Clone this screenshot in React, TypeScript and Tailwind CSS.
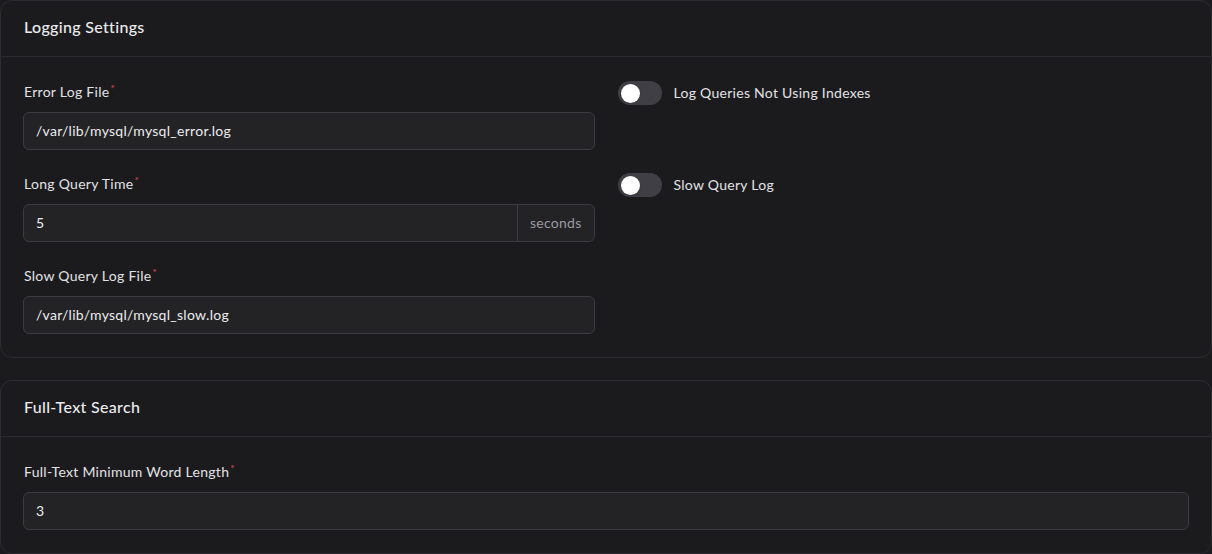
import type { ReactNode } from 'react';

const FONT = { fontFamily: 'Lato, "Noto Sans", sans-serif' };

function Card({ title, children }: { title: string; children: ReactNode }) {
  return (
    <section className="rounded-xl border border-[#2c2c30] bg-[#1b1b1e]">
      <header className="flex h-14 items-center border-b border-[#2c2c30] px-[23px] pb-1">
        <h2 className="text-base font-medium tracking-[0.02em] text-[#ececee]">{title}</h2>
      </header>
      <div className="px-[22px] pb-[23px] pt-[25px]">{children}</div>
    </section>
  );
}

function Label({ children }: { children: ReactNode }) {
  return (
    <label className="flex h-5 items-center pl-px text-sm tracking-[0.02em] text-[#e2e2e5]">
      {children}
      <span className="-mt-2 ml-px text-[10px] leading-none text-[#e5484d]">*</span>
    </label>
  );
}

function TextField({ label, value, suffix }: { label: string; value: string; suffix?: string }) {
  return (
    <div className="flex flex-col gap-2.5">
      <Label>{label}</Label>
      <div className="flex h-[38px] overflow-hidden rounded-md border border-[#3b3b40] bg-[#232326]">
        <div className="flex flex-1 items-center px-3 text-sm tracking-[0.02em] text-[#ececee]">{value}</div>
        {suffix && (
          <div className="flex items-center border-l border-[#3b3b40] px-3 text-sm tracking-[0.02em] text-[#9a9aa0]">
            {suffix}
          </div>
        )}
      </div>
    </div>
  );
}

function Toggle({ label }: { label: string }) {
  return (
    <div className="-mt-px flex items-center gap-3 self-start">
      <div className="flex h-6 w-11 items-center rounded-full bg-[#3f3f45] px-[3px]">
        <div className="h-[19px] w-[19px] rounded-full bg-white shadow" />
      </div>
      <span className="text-sm tracking-[0.02em] text-[#e2e2e5]">{label}</span>
    </div>
  );
}

export default function App() {
  return (
    <div className="flex min-h-screen flex-col gap-[22px] bg-[#1b1b1e]" style={FONT}>
      <Card title="Logging Settings">
        <div className="grid grid-cols-2 gap-x-[23px] gap-y-6">
          <TextField label="Error Log File" value="/var/lib/mysql/mysql_error.log" />
          <Toggle label="Log Queries Not Using Indexes" />
          <TextField label="Long Query Time" value="5" suffix="seconds" />
          <Toggle label="Slow Query Log" />
          <TextField label="Slow Query Log File" value="/var/lib/mysql/mysql_slow.log" />
          <div />
        </div>
      </Card>
      <Card title="Full-Text Search">
        <TextField label="Full-Text Minimum Word Length" value="3" />
      </Card>
    </div>
  );
}
